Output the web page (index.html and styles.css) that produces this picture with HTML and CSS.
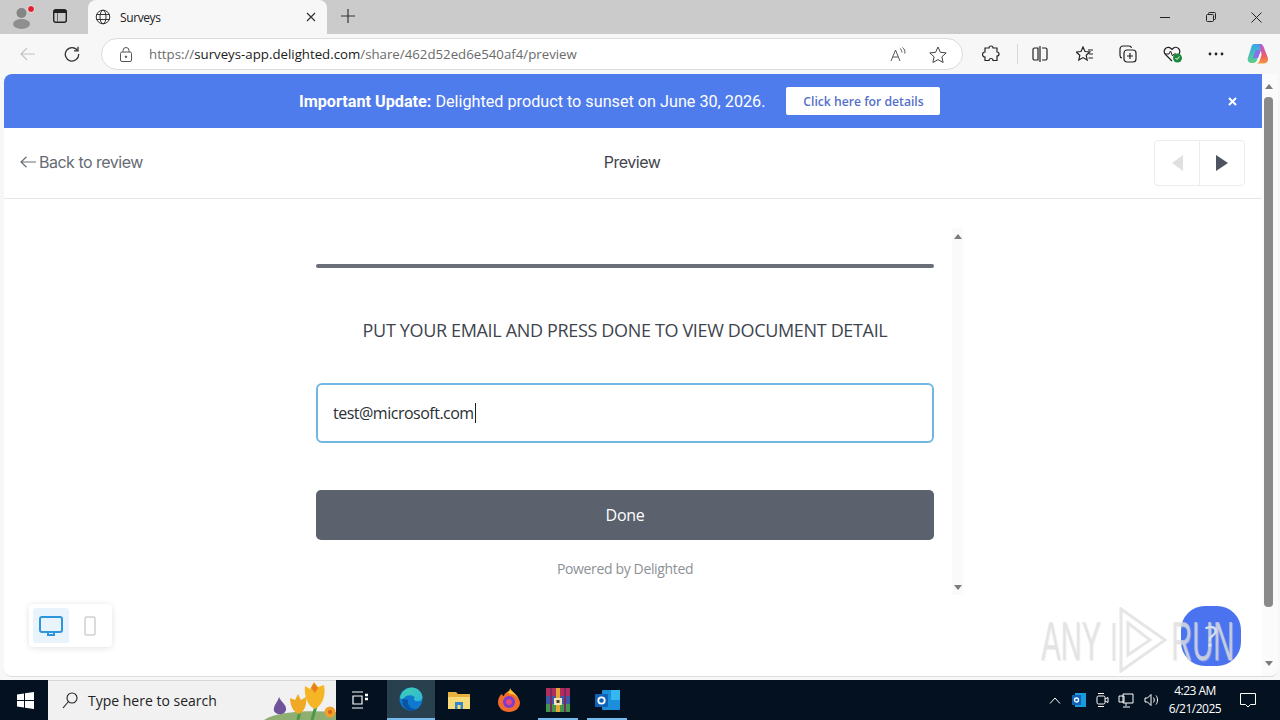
FILE: index.html
```html
<!DOCTYPE html>
<html lang="en">
<head>
    <meta charset="utf-8">
    <title>Surveys</title>
    <link rel="stylesheet" href="styles.css">
</head>
<body>
    <!-- browser tabs -->
    <div class="tabbar">
        <div class="profile">
            <svg width="26" height="28" viewBox="0 0 26 28"><circle cx="10.500" cy="10" r="5" fill="#858585"/><ellipse cx="10.500" cy="21" rx="8.500" ry="5" fill="#8f8f8f"/><circle cx="20" cy="6" r="3.500" fill="#e0202e" stroke="#e6e6e6"/></svg>
        </div>
        <div class="tabstrip-btn">
            <svg width="14" height="14" viewBox="0 0 14 14"><rect x=".7" y=".7" width="12.600" height="12.600" rx="2" fill="none" stroke="#222" stroke-width="1.400"/><path d="M1 1h12v3H1z" fill="#222"/><path d="M4.500 4v9" stroke="#666"/></svg>
        </div>
        <div class="tab">
            <svg class="tab-globe" width="16" height="16" viewBox="0 0 16 16" fill="none" stroke="#333"><circle cx="8" cy="8" r="6.800"/><ellipse cx="8" cy="8" rx="3" ry="6.800"/><path d="M1.500 5.500h13M1.500 10.500h13"/></svg>
            <span class="tab-title">Surveys</span>
            <svg width="10" height="10" viewBox="0 0 10 10" stroke="#333" stroke-width="1.200"><path d="M1 1l8 8M9 1l-8 8"/></svg>
        </div>
        <div class="newtab">
            <svg width="14" height="14" viewBox="0 0 14 14" stroke="#333" stroke-width="1.200"><path d="M7 0v14M0 7h14"/></svg>
        </div>
        <div class="window-btns">
            <svg width="10" height="10" viewBox="0 0 10 10" stroke="#222"><path d="M0 5.500h10"/></svg>
            <svg width="10" height="10" viewBox="0 0 10 10" fill="none" stroke="#222"><rect x=".5" y="2.500" width="7" height="7" rx="1"/><path d="M2.500 2.500V1.500a1 1 0 0 1 1-1h5a1 1 0 0 1 1 1v5a1 1 0 0 1-1 1h-1"/></svg>
            <svg width="11" height="11" viewBox="0 0 11 11" stroke="#222"><path d="M.5.500l10 10M10.500.500l-10 10"/></svg>
        </div>
    </div>

    <!-- address bar -->
    <div class="toolbar">
        <svg class="nav-back" width="16" height="14" viewBox="0 0 16 14" fill="none" stroke="#c4c4c4" stroke-width="1.200"><path d="M15 7H1M7 1L1 7l6 6"/></svg>
        <svg class="nav-reload" width="16" height="16" viewBox="0 0 16 16" fill="none" stroke="#333" stroke-width="1.300"><path d="M13.500 4.500A6.700 6.700 0 1 0 14.700 8"/><path d="M14 .8v4H10"/></svg>
        <div class="addressbar">
            <svg class="lock" width="12" height="15" viewBox="0 0 12 15" fill="none" stroke="#555"><rect x=".5" y="5" width="11" height="9.500" rx="1.500"/><path d="M3 5V3.500a3 3 0 0 1 6 0V5"/><circle cx="6" cy="9.800" r=".8" fill="#555"/></svg>
            <span class="url">https://<b>surveys-app.delighted.com</b>/share/462d52ed6e540af4/preview</span>
            <svg class="read-aloud" width="16" height="15" viewBox="0 0 16 15" fill="none" stroke="#555"><path d="M1 14L5.500 3 10 14M2.800 10h5.400"/><path d="M10 1.500c1.500 1 2 2.500 1.800 4M12.500 .5c2 1.500 2.700 3.500 2.300 6"/></svg>
            <svg class="fav-star" width="18" height="17" viewBox="0 0 18 17" fill="none" stroke="#444"><path d="M9 1l2.400 5.300 5.800.6-4.300 3.900 1.200 5.700L9 13.600l-5.100 2.900 1.200-5.700L.8 6.900l5.800-.6z"/></svg>
        </div>
        <div class="tools">
            <svg width="18" height="18" viewBox="0 0 18 18" fill="none" stroke="#222" stroke-width="1.200"><path d="M7 3a2 2 0 0 1 4 0h4v4a2 2 0 0 1 0 4v4.500h-4a2 2 0 0 0-4 0H3V12a2.500 2.500 0 0 1 0-5V3z"/></svg>
            <i class="tool-sep"></i>
            <svg class="tool-split" width="16" height="16" viewBox="0 0 16 16" fill="none" stroke="#222" stroke-width="1.200"><path d="M6 2H2.500A1.500 1.500 0 0 0 1 3.500v9A1.500 1.500 0 0 0 2.500 14H6zM10 2h3.500A1.500 1.500 0 0 1 15 3.500v9a1.500 1.500 0 0 1-1.500 1.500H10M8 0v16"/></svg>
            <svg class="tool-favs" width="18" height="17" viewBox="0 0 18 17" fill="none" stroke="#222" stroke-width="1.200"><path d="M7 1l2 4.500 4.800.5-3.600 3.300 1 4.700L7 11.600 2.800 14l1-4.700L.2 6l4.800-.5zM12 4h5M13 8h4M12.500 12H17"/></svg>
            <svg class="tool-coll" width="18" height="18" viewBox="0 0 18 18" fill="none" stroke="#222" stroke-width="1.200"><path d="M3 13A2.500 2.500 0 0 1 1 10.500V4a3 3 0 0 1 3-3h6a2.500 2.500 0 0 1 2.500 2"/><rect x="5" y="5" width="12" height="12" rx="3"/><path d="M11 8v6M8 11h6"/></svg>
            <svg class="tool-health" width="20" height="18" viewBox="0 0 20 18"><path d="M9 16L2.500 9.500A4 4 0 0 1 8 3.500l1 1 1-1a4 4 0 0 1 5.500 6" fill="none" stroke="#222" stroke-width="1.200"/><path d="M2 9h4l1.500-3 2 5 1.500-2h2" fill="none" stroke="#222"/><circle cx="14.500" cy="13" r="4.500" fill="#1f8a3b"/><path d="M12.500 13l1.500 1.500 2.500-3" fill="none" stroke="#fff"/></svg>
            <svg class="tool-more" width="16" height="4" viewBox="0 0 16 4" fill="#222"><circle cx="2" cy="2" r="1.400"/><circle cx="8" cy="2" r="1.400"/><circle cx="14" cy="2" r="1.400"/></svg>
            <svg class="tool-copilot" width="22" height="22" viewBox="0 0 22 22">
                <defs>
                    <linearGradient id="cpa" x1="0" y1="0" x2="0" y2="1"><stop offset="0" stop-color="#35a6ee"/><stop offset="1" stop-color="#5fd08a"/></linearGradient>
                    <linearGradient id="cpb" x1="0" y1="0" x2="0" y2="1"><stop offset="0" stop-color="#b05be0"/><stop offset=".6" stop-color="#ef5a6a"/><stop offset="1" stop-color="#f39a3a"/></linearGradient>
                </defs>
                <path d="M7 1h7c1 0 1.500 .5 1 2l-5 14c-.7 2-2 3-4 3H4.500C1.500 20 0 17.500 1 14.500L4.500 3.500C5 2 5.800 1 7 1z" fill="url(#cpa)"/>
                <path d="M12 1c2.500 0 4 1 4.700 3l4 10.500c1 3-.7 6-3.700 6h-8c2 0 3-1 3.700-3l2-6z" fill="url(#cpb)"/>
                <path d="M9 7h5l-3 8H6z" fill="#8a6fe8"/>
            </svg>
        </div>
    </div>

    <div class="viewport">
        <div class="page">
            <div class="banner">
                <span class="banner-text"><b>Important Update:</b> Delighted product to sunset on June 30, 2026.</span>
                <a class="banner-btn">Click here for details</a>
                <svg class="banner-close" width="9" height="9" viewBox="0 0 9 9" stroke="#fff" stroke-width="2"><path d="M1 1l7 7M8 1L1 8"/></svg>
            </div>

            <div class="preview-head">
                <a class="back-link">
                    <svg width="16" height="12" viewBox="0 0 16 12" fill="none" stroke="#6b7078" stroke-width="1.200"><path d="M16 6H1M6.500.8L1 6l5.500 5.200"/></svg>
                    Back to review
                </a>
                <span class="preview-title">Preview</span>
                <div class="pager">
                    <div class="pager-btn"><i class="arrow-left"></i></div>
                    <div class="pager-btn"><i class="arrow-right"></i></div>
                </div>
            </div>

            <div class="stage">
                <div class="survey-frame">
                    <div class="survey">
                        <div class="progress"></div>
                        <p class="question">PUT YOUR EMAIL AND PRESS DONE TO VIEW DOCUMENT DETAIL</p>
                        <div class="email-box">test@microsoft.com<i class="caret"></i></div>
                        <div class="done-btn">Done</div>
                        <p class="powered">Powered by Delighted</p>
                    </div>
                    <div class="survey-scroll">
                        <i class="tri-up"></i>
                        <i class="tri-down"></i>
                    </div>
                </div>
            </div>

            <div class="device-switch">
                <div class="device active">
                    <svg width="26" height="24" viewBox="0 0 26 24" fill="none" stroke="#2f96dc" stroke-width="2"><rect x="2" y="3" width="22" height="15" rx="2"/><path d="M10 18v3h6v-3"/></svg>
                </div>
                <div class="device">
                    <svg width="12" height="20" viewBox="0 0 12 20" fill="none" stroke="#cfcfcf" stroke-width="1.500"><rect x="1" y="1" width="10" height="18" rx="1.500"/></svg>
                </div>
            </div>

            <div class="help-bubble">?</div>
            <div class="watermark">
                <span>ANY</span>
                <svg width="56" height="66" viewBox="0 0 56 66" fill="none" stroke="#e6e6e6" stroke-width="3"><path d="M2 16v38M9 2l44 31-44 31zM16 16l22 17-22 15z"/></svg>
                <span>RUN</span>
            </div>
        </div>
        <div class="scrollbar">
            <i class="tri-up"></i>
            <div class="scroll-thumb"></div>
            <i class="tri-down"></i>
        </div>
    </div>

    <!-- windows taskbar -->
    <div class="taskbar">
        <div class="start">
            <svg width="17" height="17" viewBox="0 0 17 17" fill="#fff"><path d="M0 2.500l7-1V8H0zM8 1.300L17 0v8H8zM0 9h7v6.500l-7-1zM8 9h9v8l-9-1.300z"/></svg>
        </div>
        <div class="searchbox">
            <svg width="16" height="17" viewBox="0 0 16 17" fill="none" stroke="#222" stroke-width="1.100"><circle cx="10" cy="6" r="5"/><path d="M6.500 9.500L1 16"/></svg>
            <span>Type here to search</span>
            <svg class="search-art" width="78" height="40" viewBox="0 0 78 40">
                <path d="M6 40c12-8 40-10 72-8v8z" fill="#8fae72"/>
                <path d="M21 17c-1 5-6 8-5 14 3 5 11 4 12-1 1-5-5-8-7-13z" fill="#6f5299"/>
                <path d="M42 30l-2 10M58 26l-4 14" stroke="#4c9a48" stroke-width="3"/>
                <path d="M32 18l5 2 3-6 3 6 5-3c1 7-1 14-7 17-6-2-9-9-9-16z" fill="#f0a925"/>
                <path d="M47 6l5 3 4-7 4 5 6-2c2 9-1 20-9 24-8-3-11-14-10-23z" fill="#f6b524"/>
                <path d="M53 8l3-5 4 5-3 5z" fill="#e6801d"/>
                <circle cx="72" cy="32" r="5.500" fill="#f0a02c"/>
                <circle cx="72" cy="32" r="2" fill="#d9601b"/>
            </svg>
        </div>
        <div class="task-icon">
            <svg width="16" height="18" viewBox="0 0 16 18" fill="none" stroke="#fff" stroke-width="1.200"><path d="M0 1h11M0 17h11M1 5h9v8H1z"/><path d="M13 4h3M13 8h3" stroke-width="2.400"/></svg>
        </div>
        <div class="task-icon task-edge">
            <svg width="24" height="24" viewBox="0 0 24 24">
                <defs>
                    <linearGradient id="edg" x1="0" y1="0" x2="1" y2="1"><stop offset="0" stop-color="#3fd0b0"/><stop offset="1" stop-color="#2fb6d8"/></linearGradient>
                </defs>
                <circle cx="12" cy="12" r="11.500" fill="#0f78d0"/>
                <path d="M1 11C2 4 8 .5 12.500 .5c6.500 0 11 5 11 10 0 3-3 4.500-6.500 3.500-2.500-.7-2.300-2.300-1.300-3.500C14 7.500 8 7.500 5.500 10.500 4.500 12 2.500 12.500 1 11z" fill="url(#edg)"/>
                <path d="M9 13c-1 5 3 10 9 9.200-3 2-7 2-10 .3-3.500-2-5.300-6-4.500-10.500z" fill="#0a559f"/>
            </svg>
        </div>
        <div class="task-icon">
            <svg width="22" height="19" viewBox="0 0 22 19"><path d="M0 1h8l2 2h12v15H0z" fill="#e6b13e"/><path d="M0 6h22v12H0z" fill="#f8da78"/><rect x="7" y="11" width="8" height="7" fill="#2f86c9"/><rect x="9.500" y="14" width="3" height="4" fill="#f8da78"/></svg>
        </div>
        <div class="task-icon task-fox">
            <svg width="24" height="24" viewBox="0 0 24 24">
                <path d="M12 3c3 1 5 3 6 4 3 2 5 5 5 8 0 5-5 9-11 9S1 20 1 14c0-4 2-7 4-8 0 1 1 2 2 2 0-2 2-4 5-5z" fill="#f26b2a"/>
                <path d="M13 0c1 3 6 5 9 11-2-2-5-5-8-5-2 0-3-1-3-2 1-1 2-2 2-4z" fill="#fcc52e"/>
                <circle cx="12" cy="14" r="6" fill="#7d3bd0"/>
                <circle cx="12" cy="14" r="3" fill="#e8487a"/>
            </svg>
        </div>
        <div class="task-icon task-open">
            <svg width="24" height="24" viewBox="0 0 24 24"><rect width="24" height="8" fill="#b22d5e"/><rect y="8" width="24" height="8" fill="#3e5aa6"/><rect y="16" width="24" height="8" fill="#41964c"/><rect x="4" width="2" height="24" fill="#7a2a62"/><rect x="18" width="2" height="24" fill="#7a2a62"/><rect x="10" width="4" height="24" fill="#e8a838"/><rect x="8" y="10" width="8" height="7" fill="#f4e6c0"/><rect x="10.500" y="12" width="3" height="3" fill="#4a3a22"/></svg>
        </div>
        <div class="task-icon task-open">
            <svg width="25" height="22" viewBox="0 0 25 22"><rect x="7" y="1" width="18" height="20" rx="1" fill="#1c8fdc"/><rect x="16" y="1" width="9" height="10" fill="#35b8f0"/><rect y="5" width="13" height="13" rx="1" fill="#0f62b5"/><circle cx="6.500" cy="11.500" r="3.200" fill="none" stroke="#fff" stroke-width="1.800"/></svg>
        </div>
        <div class="tray">
            <svg width="12" height="7" viewBox="0 0 12 7" fill="none" stroke="#fff"><path d="M1 6.500l5-5.500 5 5.500"/></svg>
            <svg class="tray-outlook" width="14" height="16" viewBox="0 0 14 16"><rect x="3" y="1" width="11" height="14" fill="#1c9ae0"/><rect y="3" width="9" height="10" fill="#0f62b5"/><circle cx="4.500" cy="8" r="2" fill="none" stroke="#fff" stroke-width="1.300"/></svg>
            <svg width="14" height="16" viewBox="0 0 14 16" fill="none" stroke="#fff"><rect x="1" y="4" width="8" height="8" rx="1.500"/><path d="M9 7l3-1.500v5L9 9M2 1.500h6M2 14.500h6"/></svg>
            <svg class="tray-net" width="16" height="15" viewBox="0 0 16 15" fill="none" stroke="#fff"><path d="M5 1h10v9H5zM1 3h5v6H1zM8 10v3M5 14h7"/></svg>
            <svg width="15" height="14" viewBox="0 0 15 14" fill="none" stroke="#fff"><path d="M1 5h2.500L7 1.500v11L3.500 9H1zM9.500 4.500c1 1.500 1 3.500 0 5M12 2.500c2 2.500 2 6.500 0 9"/></svg>
            <div class="clock"><span>4:23 AM</span><span>6/21/2025</span></div>
            <svg class="notify" width="16" height="15" viewBox="0 0 16 15" fill="none" stroke="#fff"><path d="M.5.500h15v11h-5L8 14l-2.500-2.500h-5z"/></svg>
        </div>
    </div>
</body>
</html>
```

FILE: styles.css
```css
* {
    box-sizing: border-box;
}

svg {
    display: block;
    flex-shrink: 0;
}

body {
    margin: 0;
    width: 1280px;
    height: 720px;
    overflow: hidden;
    display: flex;
    flex-direction: column;
    background: #f7f7f7;
    font-family: "Open Sans", sans-serif;
}

.tabbar {
    height: 34px;
    background: #cbcbcb;
    display: flex;
    align-items: flex-end;
    flex-shrink: 0;
}

.profile {
    width: 44px;
    height: 34px;
    padding: 3px 0 0 11px;
}

.tabstrip-btn {
    width: 27px;
    height: 34px;
    padding: 9px 0 0 9px;
}

.tab {
    width: 239px;
    height: 34px;
    margin-left: 17px;
    background: #f7f7f7;
    border-radius: 8px 8px 0 0;
    display: flex;
    align-items: center;
    padding: 0 11px 0 6px;
    color: #222;
    font-size: 12px;
    letter-spacing: -0.4px;
}

.tab-title {
    flex: 1;
    margin-left: 9px;
}

.tab-globe {
    margin-left: 1px;
}

.newtab {
    width: 22px;
    height: 34px;
    padding-top: 9px;
    margin-left: 14px;
}

.window-btns {
    margin-left: auto;
    height: 34px;
    width: 120px;
    padding: 0 18px 0 0;
    display: flex;
    align-items: center;
    justify-content: space-between;
}

.toolbar {
    height: 40px;
    background: #f7f7f7;
    display: flex;
    align-items: center;
    flex-shrink: 0;
    padding-left: 20px;
}

.nav-reload {
    margin-left: 28px;
}

.addressbar {
    width: 862px;
    height: 32px;
    margin-left: 21px;
    background: #fff;
    border: 1px solid #dcdcdc;
    border-radius: 16px;
    display: flex;
    align-items: center;
    padding: 0 15px 0 18px;
}

.url {
    flex: 1;
    margin-left: 17px;
    font-size: 13.250px;
    color: #6b6b6b;
}

.url b {
    font-weight: 400;
    color: #1a1a1a;
}

.fav-star {
    margin-left: 23px;
}

.tools {
    flex: 1;
    display: flex;
    align-items: center;
    padding-left: 19px;
}

.tool-sep {
    width: 1px;
    height: 20px;
    margin-left: 17px;
    background: #d8d8d8;
}

.tool-split {
    margin-left: 14px;
}

.tool-favs {
    margin-left: 28px;
}

.tool-coll {
    margin-left: 25px;
}

.tool-health {
    margin-left: 26px;
}

.tool-more {
    margin-left: 25px;
}

.tool-copilot {
    margin-left: 23px;
}

.viewport {
    flex: 1;
    min-height: 0;
    display: flex;
    padding: 0 2px 3px 4px;
}

.page {
    width: 1258px;
    background: #fff;
    border-radius: 8px 0 0 8px;
    border-bottom: 1px solid #dedede;
    overflow: hidden;
    position: relative;
    display: flex;
    flex-direction: column;
}

.banner {
    height: 54px;
    background: #4f7cec;
    color: #fff;
    display: flex;
    align-items: center;
    padding-left: 295px;
    font-family: Roboto, sans-serif;
    font-size: 16.200px;
    flex-shrink: 0;
}

.banner-btn {
    width: 154px;
    height: 28px;
    margin-left: 21px;
    background: #fff;
    border-radius: 2px;
    color: #5470c8;
    font-family: "Open Sans", sans-serif;
    font-size: 12.200px;
    font-weight: 600;
    display: flex;
    align-items: center;
    justify-content: center;
}

.banner-close {
    margin-left: 288px;
}

.preview-head {
    height: 71px;
    border-bottom: 1px solid #e6e6e6;
    display: flex;
    align-items: center;
    font-family: Inter, sans-serif;
    font-size: 16px;
    letter-spacing: -0.5px;
    flex-shrink: 0;
    padding: 0 17px 0 16px;
    position: relative;
}

.back-link {
    color: #666b73;
    display: flex;
    align-items: center;
    gap: 3px;
    margin-bottom: 2px;
}

.preview-title {
    color: #3f444c;
    margin-left: 461px;
    margin-bottom: 2px;
}

.pager {
    margin-left: auto;
    width: 91px;
    height: 46px;
    border: 1px solid #ececec;
    border-radius: 4px;
    display: flex;
}

.pager-btn {
    flex: 1;
    display: flex;
    align-items: center;
    justify-content: center;
}

.pager-btn + .pager-btn {
    border-left: 1px solid #ececec;
}

.arrow-left {
    border: 8px solid transparent;
    border-left: 0;
    border-right: 11px solid #e0e0e0;
}

.arrow-right {
    border: 8px solid transparent;
    border-right: 0;
    border-left: 12px solid #4d5460;
}

.stage {
    flex: 1;
    display: flex;
    justify-content: center;
    padding-top: 29px;
}

.survey-frame {
    width: 666px;
    height: 367px;
    display: flex;
    padding-left: 16px;
}

.survey {
    width: 618px;
    margin-right: 18px;
    padding-top: 36px;
    text-align: center;
}

.progress {
    height: 4px;
    border-radius: 2px;
    background: #696e78;
}

.question {
    margin: 50px 0 0;
    font-size: 18px;
    line-height: 24px;
    color: #3e444e;
    letter-spacing: -0.34px;
}

.email-box {
    height: 60px;
    margin-top: 41px;
    border: 2px solid #74b6e2;
    border-radius: 6px;
    display: flex;
    align-items: center;
    padding-left: 15px;
    font-size: 16px;
    letter-spacing: -0.5px;
    color: #2b2f36;
}

.caret {
    width: 1px;
    height: 20px;
    margin-left: 1px;
    background: #222;
}

.done-btn {
    height: 50px;
    margin-top: 47px;
    background: #5b616d;
    border-radius: 5px;
    color: #fff;
    font-size: 16px;
    letter-spacing: -0.3px;
    line-height: 50px;
}

.powered {
    margin: 20px 0 0;
    font-size: 14px;
    letter-spacing: -0.35px;
    line-height: 18px;
    color: #8d9197;
}

.survey-scroll {
    width: 11px;
    background: #fafafa;
    display: flex;
    flex-direction: column;
    justify-content: space-between;
    align-items: center;
    padding: 6px 0 5px;
}

.tri-up {
    border: 4.500px solid transparent;
    border-top: 0;
    border-bottom: 5px solid #7c7c7c;
}

.tri-down {
    border: 4.500px solid transparent;
    border-bottom: 0;
    border-top: 5px solid #7c7c7c;
}

/* floating bits over the page */
.device-switch {
    position: absolute;
    left: 25px;
    top: 530px;
    width: 83px;
    height: 43px;
    padding: 4px 0 4px 4px;
    background: #fff;
    border-radius: 4px;
    box-shadow: 0 1px 6px rgba(0, 0, 0, 0.12);
    display: flex;
}

.device {
    width: 42px;
    height: 35px;
    display: flex;
    align-items: center;
    justify-content: center;
}

.device.active {
    width: 36px;
    background: #e8f3fc;
    border-radius: 3px;
}

.help-bubble {
    position: absolute;
    left: 1177px;
    top: 532px;
    width: 60px;
    height: 60px;
    border-radius: 24px;
    background: #4b73f0;
    color: #d7e0f8;
    font-size: 30px;
    line-height: 60px;
    text-align: center;
}

.watermark {
    position: absolute;
    left: 1037px;
    top: 533px;
    display: flex;
    align-items: center;
    font-family: "Liberation Sans", sans-serif;
    font-size: 56px;
    color: rgba(222, 222, 222, 0.7);
    text-shadow: 2px 1px 1px rgba(226, 226, 226, 0.5);
}

.watermark svg {
    margin: 0 3px 0 11px;
}

.watermark span {
    display: block;
    width: 60px;
    transform: scaleX(0.52);
    transform-origin: left center;
}

.scrollbar {
    width: 16px;
    background: #fbfbfb;
    border-bottom: 1px solid #dedede;
    border-radius: 0 0 8px 0;
    display: flex;
    flex-direction: column;
    align-items: center;
    padding: 10px 3px 10px 0;
}

.scroll-thumb {
    width: 9px;
    flex: 1;
    margin: 8px 0 54px;
    background: #8a8a8a;
    border-radius: 4px;
}

.taskbar {
    height: 40px;
    flex-shrink: 0;
    background: #031120;
    display: flex;
    align-items: stretch;
}

.start {
    width: 48px;
    display: flex;
    align-items: center;
    justify-content: center;
    padding-left: 3px;
}

.searchbox {
    width: 288px;
    background: #f1f1f1;
    border-top: 1px solid #d6d6d6;
    display: flex;
    align-items: center;
    padding-left: 14px;
    font-size: 14px;
    color: #222;
    overflow: hidden;
}

.searchbox span {
    margin-left: 10px;
    flex: 1;
}

.search-art {
    align-self: flex-end;
}

.task-icon {
    width: 48px;
    display: flex;
    align-items: center;
    justify-content: center;
    margin-right: 1px;
}

.task-edge {
    background: #29404f;
    border-bottom: 2px solid #76b9ed;
    margin: 0 0 0 2px;
}

.task-fox {
    margin-left: 1px;
}

.task-open {
    position: relative;
}

.task-open::after {
    content: "";
    position: absolute;
    left: 4px;
    right: 4px;
    bottom: 0;
    height: 2px;
    background: #76b9ed;
}

.tray {
    margin-left: auto;
    display: flex;
    align-items: center;
    gap: 10px;
    padding-right: 24px;
    color: #fff;
}

.tray-outlook {
    margin-left: 1px;
}

.tray-net {
    margin-left: -2px;
}

.clock {
    width: 52px;
    display: flex;
    flex-direction: column;
    align-items: center;
    font-size: 12px;
    letter-spacing: -0.5px;
    line-height: 18px;
}

.notify {
    margin-left: 9px;
}
```
